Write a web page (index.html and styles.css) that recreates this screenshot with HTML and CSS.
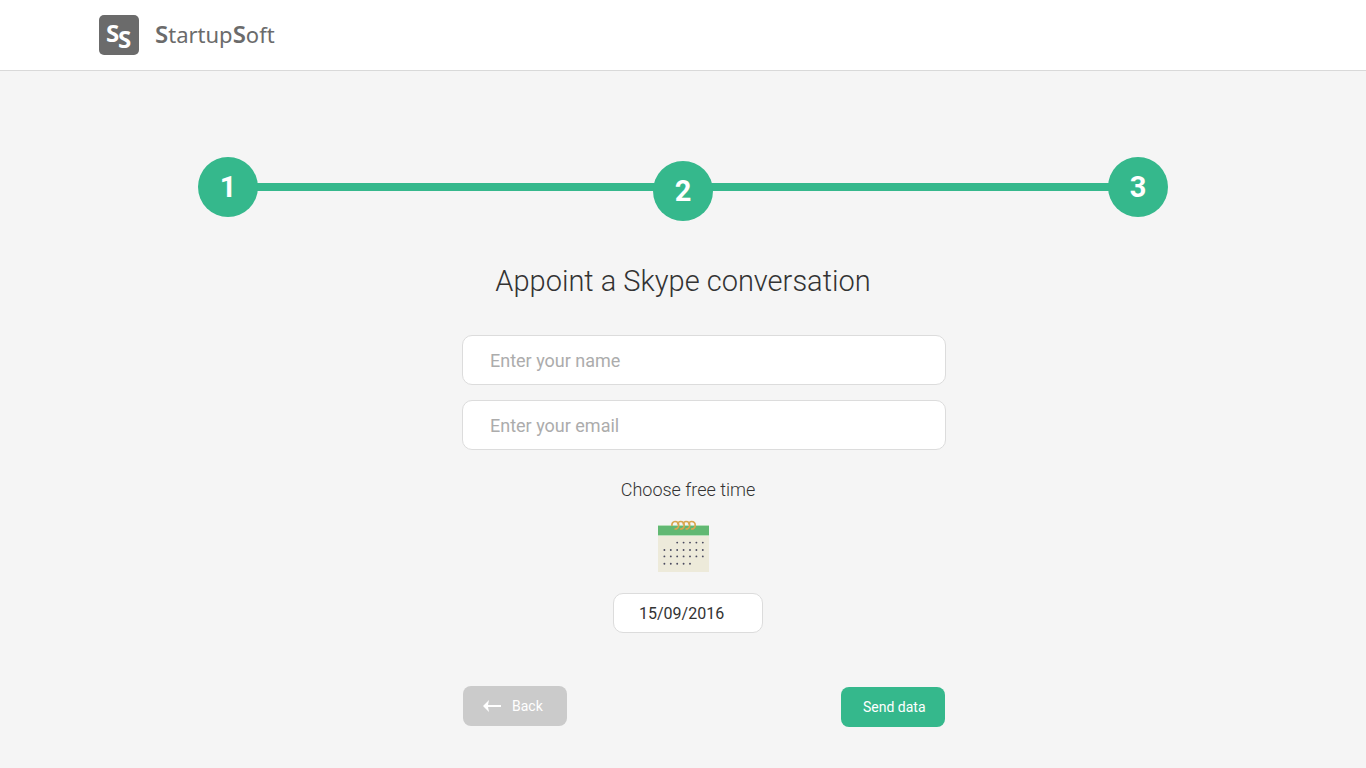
FILE: index.html
```html
<!DOCTYPE html>
<html lang="en">
<head>
<meta charset="utf-8">
<meta name="viewport" content="width=device-width, initial-scale=1">
<title>StartupSoft</title>
<link rel="stylesheet" href="styles.css">
</head>
<body>
<header class="header">
  <a class="brand" href="#">
    <svg class="brand-mark" viewBox="0 0 40 40" aria-hidden="true">
      <rect width="40" height="40" rx="5" fill="#6b6b6b"/>
      <text x="7" y="27">S</text>
      <text x="19" y="33">S</text>
    </svg>
    <span class="brand-name"><b>S</b>tartup<b>S</b>oft</span>
  </a>
</header>
<main class="main">
  <ol class="steps">
    <li class="step">1</li>
    <li class="step step-current">2</li>
    <li class="step">3</li>
  </ol>
  <h1 class="title">Appoint a Skype conversation</h1>
  <form class="form">
    <input class="field" type="text" placeholder="Enter your name" aria-label="Enter your name">
    <input class="field" type="email" placeholder="Enter your email" aria-label="Enter your email">
    <div class="schedule">
      <label class="schedule-label" for="date">Choose free time</label>
      <svg class="calendar" viewBox="0 0 51 52" aria-hidden="true">
        <rect y="5" width="51" height="47" fill="#edeada"/>
        <rect y="5" width="51" height="10" fill="#61b872"/>
        <path d="M0 5.5h51M0 15.5h51" stroke="#b5dfb9"/>
        <g fill="none" stroke="#d9a64e" stroke-width="1.7">
          <path d="M14 6C13.500 3.500 15 1.500 17 1.500c2.300 0 3.700 1.500 3.700 3.700C20.700 7.500 19 9.200 16.500 9"/>
          <path d="M19.500 4.500C20 2.500 21 1.500 22.500 1.500c2.300 0 3.700 1.500 3.700 3.700C26.200 7.500 24.500 9.200 22 9"/>
          <path d="M25 4.500C25.500 2.500 26.500 1.500 28 1.500c2.300 0 3.700 1.500 3.700 3.700C31.700 7.500 30 9.200 27.500 9"/>
          <path d="M30.500 4.500C31 2.500 32 1.500 33.500 1.500c2.300 0 3.700 1.500 3.700 3.700C37.200 7.500 35.500 9.200 33 9"/>
        </g>
        <g fill="none" stroke="#4b4b60" stroke-width="1.900" stroke-linecap="round" stroke-dasharray="0 6.400">
          <path d="M19.200 22.600h26"/>
          <path d="M6.400 30h38.800"/>
          <path d="M6.400 36.400h38.800"/>
          <path d="M6.400 43.700h26"/>
        </g>
      </svg>
      <input class="field field-date" id="date" type="text" value="15/09/2016">
    </div>
    <div class="actions">
      <button class="btn btn-back" type="button">
        <svg class="arrow" viewBox="0 0 18 12" aria-hidden="true"><path d="M0 6 6 0 5 5h13v2H5l1 5z" fill="currentColor"/></svg>
        Back
      </button>
      <button class="btn btn-send" type="submit">Send data</button>
    </div>
  </form>
</main>
</body>
</html>
```
FILE: styles.css
```css
* {
  box-sizing: border-box;
}

body {
  margin: 0;
  background: #f5f5f5;
  color: #333;
  font-family: Roboto, "Liberation Sans", sans-serif;
}

.header {
  padding: 15px 99px;
  background: #fff;
  border-bottom: 1px solid #d9d9d9;
}

.brand {
  display: inline-flex;
  gap: 16px;
  color: #6b6b6b;
  text-decoration: none;
  vertical-align: top;
}

.brand-mark {
  width: 40px;
  height: 40px;
  fill: #fff;
  font: 700 24px "Open Sans", sans-serif;
}

.brand-name {
  font: 400 22px/38px "Noto Sans", sans-serif;
}

.brand-name b {
  font-size: 24px;
  font-weight: 600;
}

.main {
  max-width: 970px;
  margin: 0 auto;
  padding: 86px 0 40px;
}

.steps {
  display: flex;
  justify-content: space-between;
  align-items: flex-start;
  height: 64px;
  margin: 0;
  padding: 0;
  list-style: none;
  background: linear-gradient(#35b88c, #35b88c) center 26px / calc(100% - 60px) 8px no-repeat;
}

.step {
  width: 60px;
  height: 60px;
  border-radius: 50%;
  background: #35b88c;
  color: #fff;
  font-size: 29px;
  font-weight: 700;
  line-height: 61px;
  text-align: center;
}

.step-current {
  margin-top: 4px;
}

.title {
  margin: 40px 0 34px;
  font-size: 29px;
  font-weight: 300;
  line-height: 40px;
  text-align: center;
}

.form {
  display: flex;
  flex-direction: column;
  gap: 15px;
  max-width: 526px;
  margin: 0 auto;
  padding-left: 42px;
}

.field {
  width: 100%;
  height: 50px;
  padding: 0 27px;
  border: 1px solid #dcdcdc;
  border-radius: 10px;
  background: #fff;
  color: #333;
  font: 400 18px Roboto, sans-serif;
}

.field::placeholder {
  color: #acacac;
}

.schedule {
  display: flex;
  flex-direction: column;
  align-items: center;
  padding: 13px 32px 0 0;
}

.schedule-label {
  font-size: 18px;
  font-weight: 300;
  line-height: 24px;
}

.calendar {
  width: 51px;
  height: 52px;
  margin: 18px 9px 21px 0;
}

.field-date {
  width: 150px;
  height: 40px;
  padding: 0 25px;
  font-size: 16px;
}

.actions {
  display: flex;
  justify-content: space-between;
  padding: 38px 1px 0;
}

.btn {
  display: flex;
  align-items: center;
  gap: 11px;
  width: 104px;
  height: 40px;
  padding: 0 0 0 20px;
  border: 0;
  border-radius: 8px;
  color: #fff;
  font: 400 14px Roboto, sans-serif;
}

.btn-back {
  background: #cbcbcb;
}

.btn-send {
  margin-top: 1px;
  padding-left: 22px;
  background: #35b88c;
}

.arrow {
  width: 18px;
  height: 12px;
}
```
